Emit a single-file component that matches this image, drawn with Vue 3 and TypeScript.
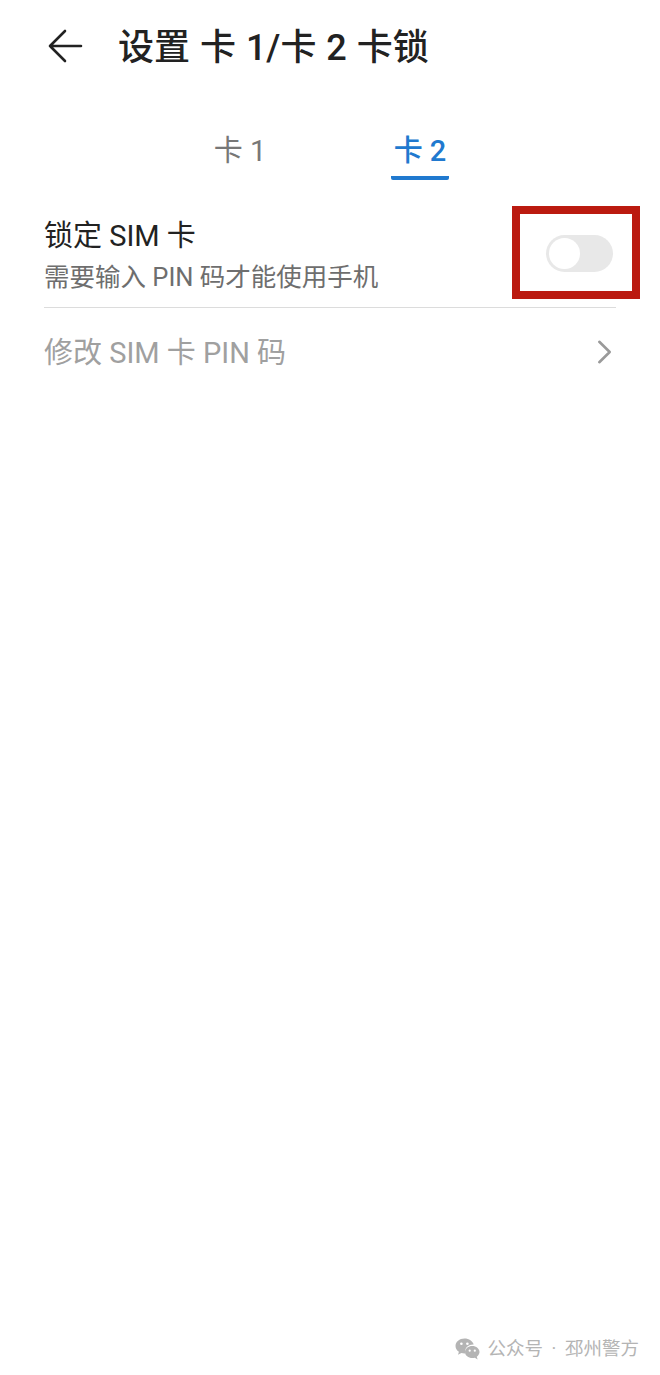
<script setup lang="ts">
import { ref } from 'vue'

defineOptions({
  name: 'SimLockPage',
})

const tabs = ['卡 1', '卡 2']
const activeTab = ref(1)
</script>

<template>
  <div class="page">
    <header class="top-bar">
      <svg class="back-icon" width="36" height="36" viewBox="0 0 36 36" fill="none">
        <path d="M17 3 L2 18 L17 33 M2 18 H33" stroke="#222" stroke-width="2.6" stroke-linecap="round" stroke-linejoin="round" />
      </svg>
      <h1 class="title">设置 卡 1/卡 2 卡锁</h1>
    </header>

    <nav class="tabs">
      <div
        v-for="(tab, i) in tabs"
        :key="tab"
        class="tab"
        :class="{ active: i === activeTab }"
      >
        {{ tab }}
      </div>
    </nav>

    <section class="list">
      <div class="row lock-row">
        <div class="row-text">
          <div class="row-title">锁定 SIM 卡</div>
          <div class="row-sub">需要输入 PIN 码才能使用手机</div>
        </div>
        <div class="switch">
          <span class="knob" />
        </div>
        <div class="mark" />
      </div>
      <div class="row pin-row">
        <div class="row-title disabled">修改 SIM 卡 PIN 码</div>
        <svg class="chevron" width="16" height="26" viewBox="0 0 16 26" fill="none">
          <path d="M2.300 2.800 L12.700 13 L2.300 23.200" stroke="#9a9a9a" stroke-width="2.6" stroke-linecap="round" stroke-linejoin="round" />
        </svg>
      </div>
    </section>

    <footer class="watermark">
      <svg class="wechat" width="25" height="23" viewBox="0 0 25 23">
        <path d="M9.5 0.5C4.5 0.5 0.5 3.9 0.5 8c0 2.4 1.3 4.4 3.4 5.800L3 16.800l3.400-1.800c1 .3 2 .5 3.100.5.300 0 .6 0 .9 0-.2-.7-.3-1.300-.3-2 0-3.900 3.500-6.900 8-6.900h.6C17.800 3.100 14 0.500 9.500 0.500z" fill="#b4b4b4" />
        <circle cx="6.400" cy="5.800" r="1.300" fill="#fff" />
        <circle cx="12.400" cy="5.800" r="1.300" fill="#fff" />
        <path d="M24.500 14c0-3.400-3.300-6.100-7.200-6.100S10 10.600 10 14s3.400 6.100 7.300 6.100c.9 0 1.700-.1 2.500-.4l2.800 1.700-.8-2.700c1.600-1.200 2.700-2.800 2.700-4.700z" fill="#b4b4b4" />
        <circle cx="14.700" cy="12.700" r="1.100" fill="#fff" />
        <circle cx="19.800" cy="12.700" r="1.100" fill="#fff" />
      </svg>
      <span>公众号 · 邳州警方</span>
    </footer>
  </div>
</template>

<style>
html,
body {
  margin: 0;
  background: #fff;
}
</style>

<style scoped>
.page {
  height: 1375px;
  display: flex;
  flex-direction: column;
  background: #fff;
  font-family: Roboto, "Noto Sans CJK SC", sans-serif;
  overflow: hidden;
}

.top-bar {
  display: flex;
  align-items: center;
  height: 36px;
  padding: 28px 0 0 48px;
}

.back-icon {
  flex: none;
}

.title {
  margin: 3px 0 0 34px;
  font-size: 36px;
  font-weight: 500;
  line-height: 36px;
  word-spacing: 1px;
  color: #222;
  white-space: nowrap;
}

.tabs {
  display: flex;
  justify-content: center;
  gap: 122px;
  margin-top: 65px;
}

.tab {
  width: 58px;
  height: 43px;
  padding-top: 4px;
  text-align: center;
  font-size: 29px;
  line-height: 36px;
  color: #777;
  white-space: nowrap;
  box-sizing: content-box;
}

.tab.active {
  color: #2079cf;
  font-weight: 500;
  border-bottom: 4px solid #2079cf;
  border-radius: 0 0 2px 2px;
}

.list {
  margin: 24px 44px 0;
  width: 572px;
}

.row {
  display: flex;
  align-items: center;
  justify-content: space-between;
  position: relative;
}

.lock-row {
  height: 103px;
  border-bottom: 1px solid #dcdcdc;
}

.pin-row {
  height: 90px;
  padding-right: 3px;
}

.row-text {
  padding-top: 2px;
}

.row-title {
  font-size: 29px;
  line-height: 40px;
  color: #222;
  white-space: nowrap;
}

.row-title.disabled {
  color: #a0a0a0;
}

.row-sub {
  font-size: 25.500px;
  line-height: 40px;
  margin-top: 1px;
  color: #6e6e6e;
  white-space: nowrap;
}

.chevron {
  margin-bottom: 3px;
}

.switch {
  width: 67px;
  height: 37px;
  margin-right: 3px;
  margin-bottom: 4px;
  border-radius: 19px;
  background: #e8e8e8;
  display: flex;
  align-items: center;
  padding-left: 3px;
  box-sizing: border-box;
}

.knob {
  width: 31px;
  height: 31px;
  border-radius: 50%;
  background: #fff;
}

/* red annotation box drawn over the screenshot */
.mark {
  position: absolute;
  left: 468px;
  top: 2px;
  width: 128px;
  height: 93px;
  box-sizing: border-box;
  border: 8px solid #bb1a10;
}

.watermark {
  margin-top: auto;
  display: flex;
  align-items: center;
  justify-content: flex-end;
  gap: 7px;
  padding: 0 21px 14px 0;
  font-size: 18.500px;
  line-height: 24px;
  word-spacing: 4px;
  color: #b4b4b4;
  white-space: nowrap;
}

.wechat {
  flex: none;
}
</style>
